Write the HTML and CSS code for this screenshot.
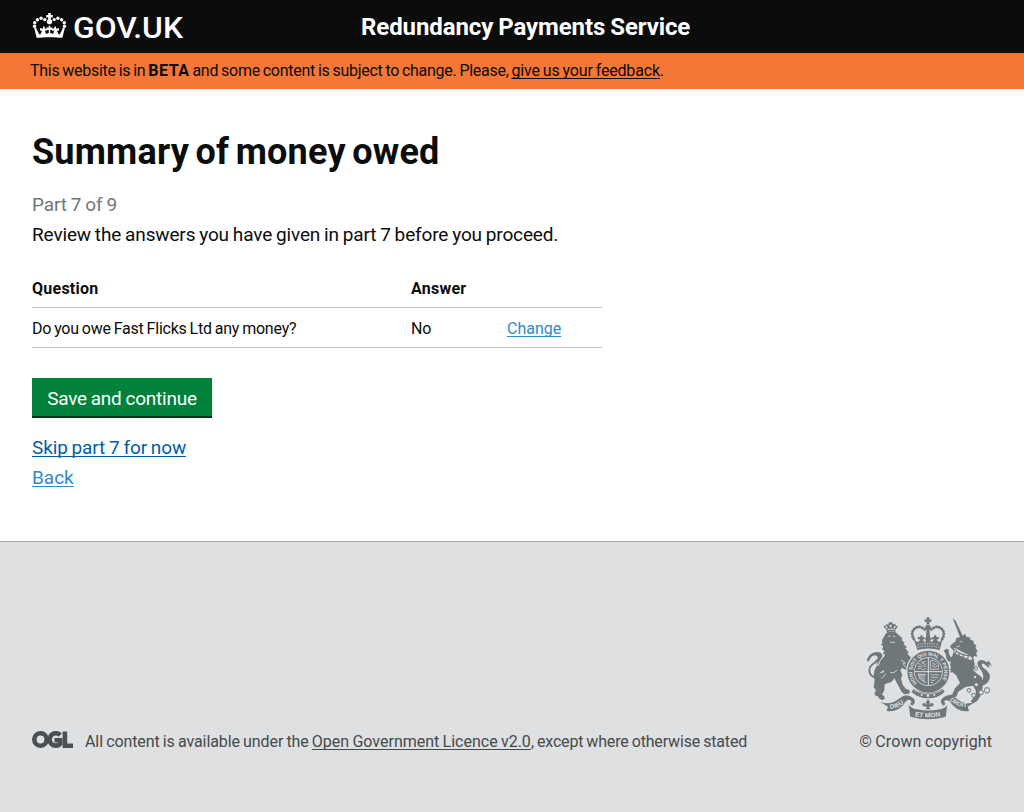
FILE: index.html
```html
<!DOCTYPE html>
<html lang="en">
<head>
<meta charset="utf-8">
<title>Summary of money owed - Redundancy Payments Service</title>
<link rel="stylesheet" href="styles.css">
</head>
<body>
<header class="header">
  <a class="logo" href="#" aria-label="GOV.UK">
    <svg width="152" height="36" viewBox="0 0 152 36">
      <g fill="#fff">
        <path d="M16.200 1h2.600v2h2v2.400h-2v1.800l1.300 1.500v2.200L18.500 12.300h-2l-1.600-1.400V8.700l1.300-1.500V5.400h-2V3h2z"/>
        <circle cx="12.800" cy="7.600" r="1.700"/><circle cx="9.100" cy="6.300" r="1.700"/><circle cx="5.400" cy="7.700" r="1.700"/><circle cx="2.700" cy="10.700" r="1.700"/><circle cx="2.500" cy="14.300" r="1.700"/>
        <circle cx="22.200" cy="7.600" r="1.700"/><circle cx="25.900" cy="6.300" r="1.700"/><circle cx="29.600" cy="7.700" r="1.700"/><circle cx="32.300" cy="10.700" r="1.700"/><circle cx="32.500" cy="14.300" r="1.700"/>
        <path d="M2.200 16l1.700-.4L6.200 20.500 8 23l2-4-2-.4.200-2.600 2.600.7.300-2.200h1.400l.4 2.200 2.200-.5v2.600l-2.200-.3 1 3.500 3-1.300-.2-3-2.100.4v-2.800l2.100.5v-2h1.600v2l2.100-.5v2.800l-2.100-.4-.2 3 3 1.300 1-3.500-2.200.3v-2.600l2.200.5.4-2.200h1.400l.3 2.200 2.600-.7.200 2.600-2 .4 2 4 1.800-2.500 2.300-4.900 1.700.4-2.400 9.800C24 24.900 11 24.900 4.600 25.800z"/>
      </g>
      <text class="logo-text" x="41" y="25.500" textLength="110" lengthAdjust="spacingAndGlyphs">GOV.UK</text>
    </svg>
  </a>
  <div class="service-name">Redundancy Payments Service</div>
</header>
<div class="beta">This website is in <b>BETA</b> and some content is subject to change. Please, <a href="#">give us your feedback</a>.</div>
<main class="content">
  <h1>Summary of money owed</h1>
  <p class="part">Part 7 of 9</p>
  <p class="intro">Review the answers you have given in part 7 before you proceed.</p>
  <table class="summary">
    <thead><tr><th class="question">Question</th><th class="answer">Answer</th><th></th></tr></thead>
    <tbody><tr><td>Do you owe Fast Flicks Ltd any money?</td><td>No</td><td class="change"><a href="#">Change</a></td></tr></tbody>
  </table>
  <button class="button" type="button">Save and continue</button>
  <p class="skip"><a href="#">Skip part 7 for now</a></p>
  <p class="back"><a href="#">Back</a></p>
</main>
<footer class="footer">
  <div class="licence">
    <svg class="ogl" width="41" height="17" viewBox="0 0 41 17" fill="none" stroke="#4b4f51" stroke-width="4.600">
      <circle cx="8.500" cy="8.500" r="6.200"/>
      <path d="M28.300 4.200A6.200 6.200 0 1 0 28.200 12.800V9.300H22.500"/>
      <path d="M32.900 .5V14.700H41"/>
    </svg>
    <p class="licence-text">All content is available under the <a href="#">Open Government Licence v2.0</a><span class="licence-end">, except where otherwise stated</span></p>
  </div>
  <div class="copyright">
    <svg class="crest" width="125" height="103" viewBox="21 20 375 309" fill="#6f777b">
      <defs>
        <path id="motto" d="M171 218A48 48 0 1 1 240 217"/>
        <path id="dieu" d="M91 296Q121 293 142 268"/>
        <path id="mon" d="M164 318Q204 326 250 316"/>
        <path id="droit" d="M269 270Q290 291 330 291"/>
      </defs>
      <!-- lion -->
      <g>
        <path d="M71 44l6 4 2-7 6 2 2-7h10l2 6 7-2 1 7 6-1-2 7-4 4-1 8q-13-5-25 1l-2-9-6-5z"/>
        <g fill="#dee0e2"><circle cx="80" cy="51" r="3"/><circle cx="92" cy="47" r="3.500"/><circle cx="104" cy="51" r="3"/><path d="M83 60q10-5 21-1v-3q-11-3-21 1z"/></g>
        <path d="M79 67q14-7 28-1l10 9 10 9-2 5 9 8-4 4 11 10-5 3 10 12-4 5 10 9 4 12-5 10-8 2 9 17-3 14-5-1-4-14-14-7-5 7 6 14-4 10 5 19 10 13 9 2 3 7-4 5-13 2-8-7-8-16-14-25-9 11-20 7-1 18-7 13 7 5 1 9-9 2-8-5-5-9 3-18 5-10-5-5 4-13 10-13 3-16-2-14 10-20-9-3 4-12-6 1 4-11-7-4 4-9-7-5 4-4-1-10z"/>
        <path d="M78 137q-15 7-22 22-9 12-13 22l-2 17 4 13 10 2 5-7-5-8 5-11 16-11 14-11z"/>
        <path d="M70 186l-17 6-9 18-3 20 7 10-5 9 4 7 13 3 6-7-7-9 8-7 2-14 11-11z"/>
        <path d="M54 205Q29 200 28 181Q27 168 43 158Q56 149 59 138Q60 128 48 129Q32 132 24 152" fill="none" stroke="#6f777b" stroke-width="5.500"/>
        <path d="M20 157q1-22 20-30 18-5 25 3 5 9-4 22l-13 11q11-22 1-27-10-4-18 5-5 6-11 16z"/>
        <path d="M66 142q-8 10-11 26M63 204q10-4 14-14M91 187q12 3 20-8M84 78l7-1M98 77l8 2M90 94l7 3 8-2M123 149l13 9-7 2 8 11" fill="none" stroke="#dee0e2" stroke-width="2.500"/>
      </g>
      <!-- unicorn -->
      <g>
        <path d="M278 23l9 9 24 50-9 4z"/>
        <path d="M298 81l9-4 9-6 3 8 13 3-2 5 12 6-2 4 10 11-4 3 7 13-5 3 4 12-9-2-5 7-10-9-25-12-17-10-9 4-7-7 5-8 12-9 2-10z"/>
        <path d="M281 122l15 4 33 17 12 2 3 18-4 17 13 12 12 8 2 10 1 21-8 28-8 12-12 8-8-5 8-12 8-7-1-15-8-14-23 4-22 15-4 13-12 4-8 9-12-1-4-5 9-9 14-4 8-18 15-16-12-24-8-6-10-25z"/>
        <path d="M286 151l-19 3-8-7-2-17-6-8 7-7 9 3-1 9 5 12 9 1 16-6zM286 165l-17 9-4 4 4 9 22-3z"/>
        <path d="M347 220q23-2 23-22 0-10-8-20-18-20-3-28 15-6 30 18-3 5-7 1-16-15-17-6 0 6 11 14 17 13 13 28-7 22-37 24z"/>
        <path d="M386 151l10 16-13-7-10 2z"/>
        <path d="M299 94q6-2 9 2M290 109l9-2" fill="none" stroke="#dee0e2" stroke-width="2.500"/>
        <path d="M282 123l54 23" stroke="#dee0e2" stroke-width="9"/>
        <path d="M278 116q28 21 60 21M280 131q24 17 54 21M286 121l-2 13M298 127l-3 15M311 132l-3 16M325 135l-3 17M337 135l1 18" fill="none" stroke="#6f777b" stroke-width="4"/>
        <g fill="#dee0e2" stroke="#6f777b" stroke-width="3"><circle cx="286" cy="121" r="4"/><circle cx="348" cy="174" r="5"/><circle cx="345" cy="200" r="5"/><circle cx="349" cy="223" r="6"/><circle cx="327" cy="240" r="5.500"/><circle cx="341" cy="255" r="6"/><circle cx="363" cy="246" r="7"/><circle cx="381" cy="240" r="8"/></g>
      </g>
      <!-- garter and shield -->
      <circle cx="205" cy="184" r="67" fill="#dee0e2"/>
      <circle cx="205" cy="184" r="53" fill="none" stroke="#6f777b" stroke-width="20"/>
      <text class="crest-text" font-size="15"><textPath href="#motto">HONI SOIT QUI MAL Y PENSE</textPath></text>
      <circle cx="205" cy="184" r="41"/>
      <path d="M205 143v82M164 184h82" stroke="#dee0e2" stroke-width="3"/>
      <g fill="none" stroke="#dee0e2" stroke-width="2.200">
        <path d="M175 159l7 4 5-5 10 5M173 167l9 3 6-4 11 3M173 176l9-2 6 4 11-3M183 152l5 4 9-3"/>
        <path d="M211 151h12l12 12v14h-24zM217 158l9 4-9 5 9 5 6-7"/>
        <path d="M174 190q2 18 25 27M180 190v16M186 190v22M192 190v27M174 193h25"/>
        <path d="M211 192l8 3 6-3 11 3M211 200l8 3 6-3 9 3M211 208l8 3 8-3M211 216l8 1"/>
      </g>
      <path d="M160 236q44 24 88 0l6 8q-20 20-50 20-28 0-49-19z"/>
      <path d="M163 241q41 20 83 0" fill="none" stroke="#dee0e2" stroke-width="2"/>
      <g fill="#dee0e2"><circle cx="204" cy="256" r="4"/><circle cx="185" cy="254" r="3"/><circle cx="223" cy="254" r="3"/></g>
      <!-- imperial crown -->
      <g>
        <path d="M199 21h10l-2 7 7-2v10l-7-2 2 8h-10l2-8-7 2V26l7 2z"/>
        <circle cx="204" cy="51" r="8"/>
        <path d="M200 55h8l3 37h-14z"/>
        <path d="M194 57Q177 43 163 55Q149 70 165 91M214 57Q231 43 245 55Q259 70 243 91" fill="none" stroke="#6f777b" stroke-width="9" stroke-linecap="round" stroke-dasharray="0 8.500"/>
        <path d="M194 57Q177 43 163 55Q149 70 165 91M214 57Q231 43 245 55Q259 70 243 91" fill="none" stroke="#6f777b" stroke-width="3"/>
        <path d="M162 88l12 8 7-8-8-3 1-6 6 2 2-6h5l1 6 6-1v6l-6 2 7 8 5-6-4-1V82l6 2V77h6v7l6-2v7l-5 1 5 6 8-8-7-2v-6l6 1 2-6h5l2 6 6-2 1 6-7 3 7 8 10-8-8 31q-34-9-67 0z"/>
        <path d="M171 111q33-8 66 0M172 103q32-7 64 0" fill="none" stroke="#dee0e2" stroke-width="2" stroke-dasharray="5 2"/>
      </g>
      <!-- scroll -->
      <g>
        <path d="M61 275q31 12 58-11 20-18 40-1 12 11-2 23l-7-5q9-8-1-12-6-3-12 5-21 33-57 28l4-13z"/>
        <path d="M345 275q-30 12-57-11-21-18-40-1-12 11 2 23l7-5q-9-8 1-12 6-3 12 5 22 33 57 28l-4-13z"/>
        <path d="M146 284q11 12 25 13 34 7 69 0 14-2 22-13l-5 35q-52 15-106 0z"/>
        <text class="crest-text" font-size="19"><textPath href="#dieu">DIEU</textPath></text>
        <text class="crest-text" font-size="20"><textPath href="#mon">ET MON</textPath></text>
        <text class="crest-text" font-size="18"><textPath href="#droit">DROIT</textPath></text>
        <path d="M204 266l6 10-3 8 5-5q8-4 9 4-1 7-8 5l-6 2 4 7h-14l4-7-6-2q-7 2-8-5 1-8 9-4l5 5-3-8z"/>
      </g>
    </svg>
    <p>© Crown copyright</p>
  </div>
</footer>
</body>
</html>
```
FILE: styles.css
```css
* { box-sizing: border-box; }
body { margin: 0; background: #fff; color: #0b0c0c; font-family: Roboto, "Noto Sans", sans-serif; font-size: 19px; line-height: 30px; word-spacing: -0.7px; }
p, h1 { margin: 0; }
.header { display: flex; height: 53px; padding: 12px 32px 0; background: #0b0c0c; color: #fff; }
.logo { display: block; width: 329px; height: 36px; }
.logo svg { display: block; }
.logo-text { font-family: Roboto, sans-serif; font-weight: 500; font-size: 29px; fill: #fff; }
.service-name { font-size: 24px; line-height: 30px; font-weight: 700; white-space: nowrap; letter-spacing: -0.1px; word-spacing: -0.8px; }
.beta { height: 36px; padding-left: 30px; background: #f47738; font-size: 16px; line-height: 36px; white-space: nowrap; letter-spacing: -0.27px; word-spacing: -0.8px; }
.beta b { letter-spacing: 0.5px; }
.beta a { color: inherit; letter-spacing: -0.17px; }
a { text-underline-offset: 2px; text-decoration-thickness: 1px; text-decoration-skip-ink: none; }
.content { height: 452px; padding: 43px 32px 0; }
h1 { font-size: 36px; line-height: 40px; font-weight: 700; letter-spacing: 0.2px; word-spacing: -2.6px; }
.part { margin-top: 18px; color: #6f777b; letter-spacing: -0.1px; }
.intro { letter-spacing: -0.14px; }
.summary { width: 570px; margin-top: 18px; border-collapse: separate; border-spacing: 0; table-layout: fixed; font-size: 16px; line-height: 20px; letter-spacing: -0.22px; word-spacing: -0.8px; }
.summary th, .summary td { height: 40px; padding: 11px 0 8px; border-bottom: 1px solid #bfc1c3; text-align: left; }
.summary th { letter-spacing: 0.25px; }
.summary .change { letter-spacing: 0; }
.question { width: 379px; }
.answer { width: 96px; }
.change a, .back a { color: #2e8aca; }
.button { display: block; width: 180px; height: 40px; margin-top: 30px; padding: 3px 0 0; border: 0; border-bottom: 2px solid #003618; background: #00823b; color: #fff; font: inherit; line-height: 36px; letter-spacing: -0.22px; word-spacing: -0.7px; }
.skip { margin-top: 15px; letter-spacing: -0.13px; }
.skip a { color: #005ea5; }
.footer { display: flex; justify-content: space-between; height: 271px; padding: 75px 32px 0; border-top: 1px solid #a1acb2; background: #dee0e2; color: #454a4c; font-size: 16px; line-height: 20px; word-spacing: -0.7px; }
.licence { display: flex; align-items: flex-start; gap: 12px; padding-top: 114px; }
.ogl { display: block; }
.licence-text { padding-top: 1px; white-space: nowrap; letter-spacing: -0.09px; }
.licence a { color: inherit; letter-spacing: 0; }
.licence-end { letter-spacing: -0.17px; }
.copyright { display: flex; flex-direction: column; align-items: flex-end; gap: 12px; }
.copyright p { letter-spacing: 0.08px; word-spacing: -0.5px; }
.crest { display: block; }
.crest-text { font-family: "Liberation Sans", sans-serif; font-weight: 700; fill: #dee0e2; word-spacing: 0; }
```
